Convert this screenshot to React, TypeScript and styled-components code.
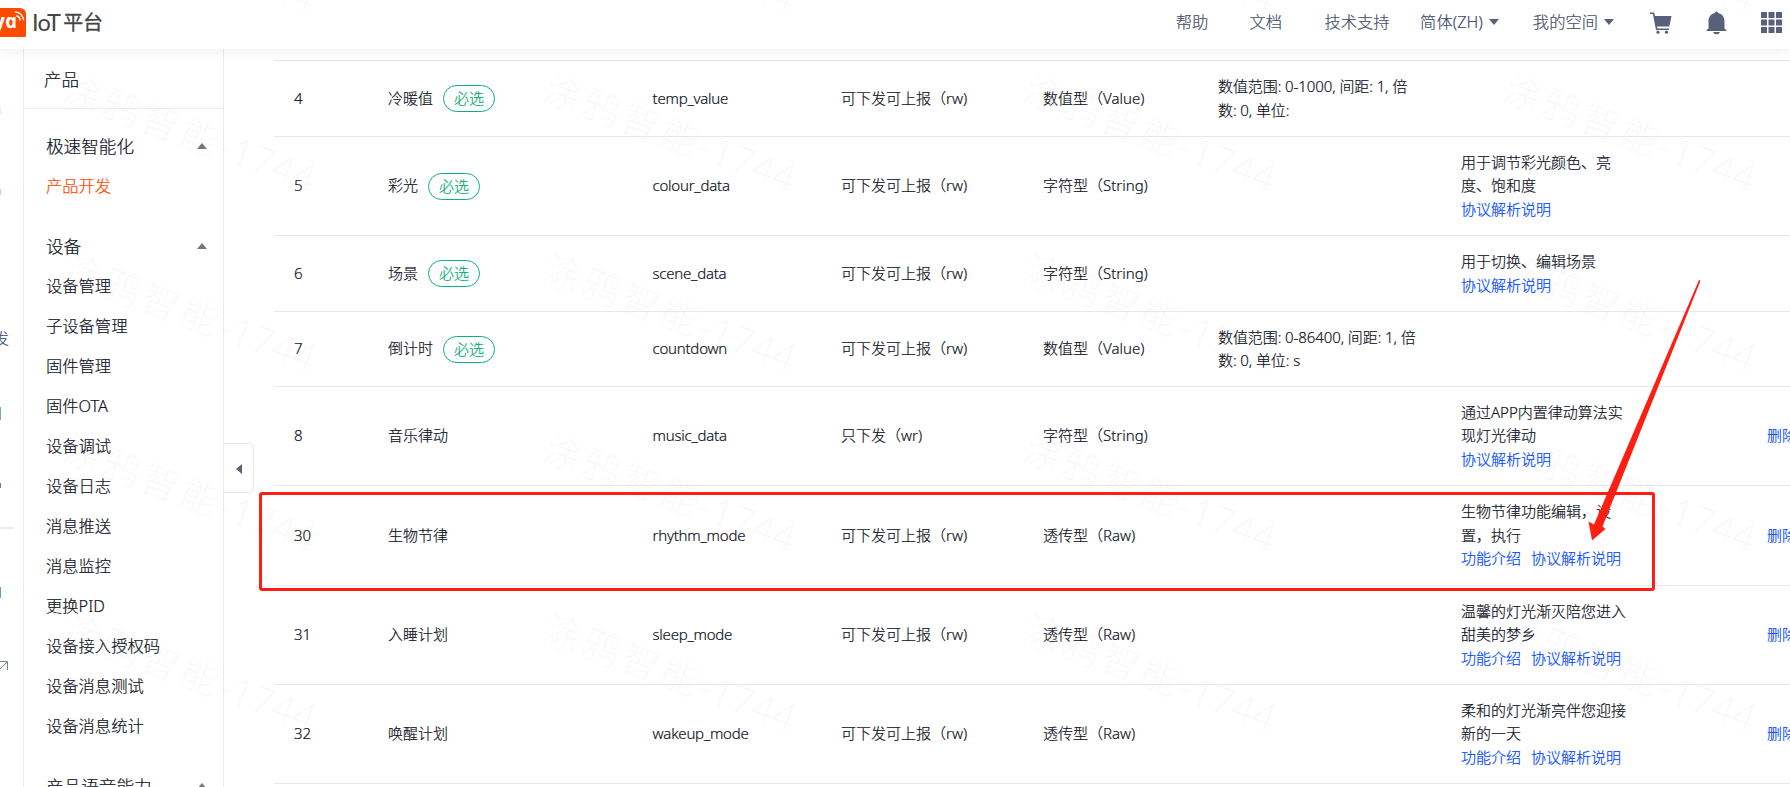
import React from "react";
import styled, { createGlobalStyle } from "styled-components";

interface MenuGroup {
	title: string;
	items: string[];
}

interface DataPoint {
	id: number;
	name: string;
	required?: boolean;
	code: string;
	transfer: string;
	type: string;
	range?: string;
	description?: string;
	links?: string[];
	removable?: boolean;
	height: number;
}

const menu: MenuGroup[] = [
	{ title: "极速智能化", items: ["产品开发"] },
	{
		title: "设备",
		items: [
			"设备管理",
			"子设备管理",
			"固件管理",
			"固件OTA",
			"设备调试",
			"设备日志",
			"消息推送",
			"消息监控",
			"更换PID",
			"设备接入授权码",
			"设备消息测试",
			"设备消息统计",
		],
	},
	{ title: "产品语音能力", items: [] },
];

const READ_WRITE = "可下发可上报（rw)";

const dataPoints: DataPoint[] = [
	{
		id: 4,
		name: "冷暖值",
		required: true,
		code: "temp_value",
		transfer: READ_WRITE,
		type: "数值型（Value)",
		range: "数值范围: 0-1000, 间距: 1, 倍数: 0, 单位:",
		height: 76,
	},
	{
		id: 5,
		name: "彩光",
		required: true,
		code: "colour_data",
		transfer: READ_WRITE,
		type: "字符型（String)",
		description: "用于调节彩光颜色、亮度、饱和度",
		links: ["协议解析说明"],
		height: 99,
	},
	{
		id: 6,
		name: "场景",
		required: true,
		code: "scene_data",
		transfer: READ_WRITE,
		type: "字符型（String)",
		description: "用于切换、编辑场景",
		links: ["协议解析说明"],
		height: 76,
	},
	{
		id: 7,
		name: "倒计时",
		required: true,
		code: "countdown",
		transfer: READ_WRITE,
		type: "数值型（Value)",
		range: "数值范围: 0-86400, 间距: 1, 倍数: 0, 单位: s",
		height: 75,
	},
	{
		id: 8,
		name: "音乐律动",
		code: "music_data",
		transfer: "只下发（wr)",
		type: "字符型（String)",
		description: "通过APP内置律动算法实现灯光律动",
		links: ["协议解析说明"],
		removable: true,
		height: 99,
	},
	{
		id: 30,
		name: "生物节律",
		code: "rhythm_mode",
		transfer: READ_WRITE,
		type: "透传型（Raw)",
		description: "生物节律功能编辑，设置，执行",
		links: ["功能介绍", "协议解析说明"],
		removable: true,
		height: 100,
	},
	{
		id: 31,
		name: "入睡计划",
		code: "sleep_mode",
		transfer: READ_WRITE,
		type: "透传型（Raw)",
		description: "温馨的灯光渐灭陪您进入甜美的梦乡",
		links: ["功能介绍", "协议解析说明"],
		removable: true,
		height: 99,
	},
	{
		id: 32,
		name: "唤醒计划",
		code: "wakeup_mode",
		transfer: READ_WRITE,
		type: "透传型（Raw)",
		description: "柔和的灯光渐亮伴您迎接新的一天",
		links: ["功能介绍", "协议解析说明"],
		removable: true,
		height: 99,
	},
];

const GlobalStyle = createGlobalStyle`
	* {
		box-sizing: border-box;
	}
	body {
		margin: 0;
		background: #fff;
		color: #10141f;
		font: 300 15px "Noto Sans", "Noto Sans CJK SC", sans-serif;
		-webkit-text-stroke: 0.2px;
	}
`;

const Page = styled.div`
	position: relative;
	display: flex;
	flex-direction: column;
	width: 1790px;
	height: 787px;
	overflow: hidden;
`;

const Header = styled.header`
	position: relative;
	z-index: 1;
	display: flex;
	flex: none;
	align-items: center;
	height: 49px;
	background: #fff;
	box-shadow: 0 2px 12px rgba(0, 0, 0, 0.07);
`;

const Brand = styled.div`
	display: flex;
	align-items: center;
	margin: -5px auto 0 0;
	color: #454545;
	-webkit-text-stroke: 0;
`;

const BrandLatin = styled.span`
	margin-left: 5px;
	font: 400 23.5px/30px Lato, sans-serif;
	letter-spacing: -0.8px;
`;

const BrandName = styled.span`
	margin-left: 3px;
	font: 400 20px/30px "Noto Sans CJK SC", sans-serif;
	-webkit-text-stroke: 0.3px;
`;

const NavItem = styled.div<{ $gap: number }>`
	display: flex;
	align-items: center;
	margin-right: ${({ $gap }) => $gap}px;
	padding-bottom: 6px;
	color: #454f69;
	font-size: 16.3px;
	line-height: 24px;
	white-space: nowrap;
`;

const CaretDown = styled.span`
	margin: 1px 0 0 6px;
	border: 5px solid transparent;
	border-top: 6px solid #57617a;
	border-bottom: 0;
`;

const HeaderIcon = styled.svg<{ $gap: number }>`
	flex: none;
	margin: -4px ${({ $gap }) => $gap}px 0 0;
	fill: #57617a;
`;

const Body = styled.div`
	display: flex;
	flex: 1;
	min-height: 0;
`;

const Rail = styled.aside`
	flex: none;
	width: 24px;
	padding-top: 58px;
	border-right: 1px solid #e9ebf6;
	overflow: hidden;
`;

const RailItem = styled.div<{ $height: number }>`
	display: flex;
	height: ${({ $height }) => $height}px;
	color: #454f69;
	font-size: 15px;
	line-height: 22px;
`;

const RailLabel = styled.span`
	margin-left: -6px;
`;

const RailMark = styled.span<{ $color: string; $height: number }>`
	width: 1px;
	height: ${({ $height }) => $height}px;
	background: ${({ $color }) => $color};
`;

const RailDivider = styled.div`
	width: 14px;
	height: 2px;
	margin-bottom: 58px;
	background: #e9ebf6;
`;

const Sidebar = styled.nav`
	flex: none;
	width: 200px;
	border-right: 1px solid #e9ebf6;
`;

const SidebarTitle = styled.div`
	height: 60px;
	padding-left: 20px;
	border-bottom: 1px solid #e9ebf6;
	font-size: 17.5px;
	line-height: 61px;
`;

const Group = styled.section`
	padding: 0 16px 0 22px;
	margin-bottom: 20px;

	&:first-of-type {
		margin-top: 17px;
	}
`;

const GroupTitle = styled.div`
	display: flex;
	align-items: center;
	justify-content: space-between;
	height: 40px;
	padding-bottom: 2px;
	font-size: 17.6px;
	white-space: nowrap;
`;

const CaretUp = styled.span`
	margin-top: 2px;
	border: 5px solid transparent;
	border-top: 0;
	border-bottom: 6px solid #777;
`;

const MenuItem = styled.div<{ $active: boolean }>`
	height: 40px;
	color: ${({ $active }) => ($active ? "#ff4a00" : "inherit")};
	font-size: 16.3px;
	line-height: 40px;
`;

const Handle = styled.div`
	display: flex;
	flex: none;
	align-items: center;
	justify-content: center;
	width: 30px;
	height: 50px;
	padding: 1px 0 0 1px;
	margin-top: 394px;
	border: 1px solid #e6e7ec;
	border-left: 0;
	border-radius: 0 5px 5px 0;
`;

const CaretLeft = styled.span`
	border: 5px solid transparent;
	border-right: 6px solid #57617a;
	border-left: 0;
`;

const Table = styled.main`
	flex: 1;
	min-width: 0;
	margin: 11px 0 0 20px;
	border-top: 1px solid #e8e9ed;
	overflow: hidden;
`;

const Row = styled.div<{ $height: number }>`
	display: grid;
	grid-template-columns: 94px 264.5px 188.5px 202px 175px 243px 306px 60px;
	align-items: center;
	height: ${({ $height }) => $height}px;
	padding-left: 20px;
	border-bottom: 1px solid #e8e9ed;
	line-height: 23.5px;
`;

const Cell = styled.div<{ $inset?: number; $spacing?: number }>`
	padding-right: ${({ $inset = 0 }) => $inset}px;
	letter-spacing: ${({ $spacing = 0 }) => $spacing}px;
`;

const NameCell = styled(Cell)`
	display: flex;
	align-items: center;
	gap: 10px;
`;

const RequiredTag = styled.span`
	width: 52px;
	height: 27px;
	border: 1px solid #0db07e;
	border-radius: 14px;
	color: #00a870;
	line-height: 24px;
	text-align: center;
`;

const Link = styled.a`
	margin-right: 10px;
	color: #0047ff;
	white-space: nowrap;
`;

const Watermark = styled.svg`
	position: absolute;
	inset: 0;
	z-index: 2;
	pointer-events: none;
`;

const Highlight = styled.div`
	position: absolute;
	top: 492px;
	left: 259px;
	z-index: 3;
	width: 1396px;
	height: 99px;
	border: 3px solid #ff1f12;
	border-radius: 3px;
`;

const Pointer = styled.svg`
	position: absolute;
	top: 278px;
	left: 1586px;
	z-index: 3;
`;

const Logo = () => (
	<svg width="27" height="29" viewBox="0 0 27 29">
		<path d="M0 0h20a6 6 0 0 1 6 6v22a1 1 0 0 1-1 1H0z" fill="#ff4a00" />
		<text
			x="0"
			y="20"
			transform="skewX(12) translate(-8.500 0)"
			fill="#fff"
			fontFamily="Open Sans"
			fontStyle="italic"
			fontWeight="700"
			fontSize="20"
		>
			ya
		</text>
		<g fill="none" stroke="#fff" strokeWidth="1.5" strokeLinecap="round">
			<path d="M16.500 8a4 4 0 0 1 3.500 4" />
			<path d="M15.500 4a9 9 0 0 1 8 7.500" />
		</g>
	</svg>
);

const DataRow = ({ point }: { point: DataPoint }) => (
	<Row $height={point.height}>
		<Cell>{point.id}</Cell>
		<NameCell>
			{point.name}
			{point.required && <RequiredTag>必选</RequiredTag>}
		</NameCell>
		<Cell $spacing={-0.22}>{point.code}</Cell>
		<Cell>{point.transfer}</Cell>
		<Cell>{point.type}</Cell>
		<Cell $inset={38} $spacing={-0.08}>
			{point.range}
		</Cell>
		<Cell $inset={134}>
			{point.description}
			{point.links && (
				<div>
					{point.links.map((link) => (
						<Link key={link}>{link}</Link>
					))}
				</div>
			)}
		</Cell>
		<Cell>{point.removable && <Link>删除</Link>}</Cell>
	</Row>
);

export default function App() {
	return (
		<Page>
			<GlobalStyle />
			<Header>
				<Brand>
					<Logo />
					<BrandLatin>IoT</BrandLatin>
					<BrandName>平台</BrandName>
				</Brand>
				<NavItem $gap={41}>帮助</NavItem>
				<NavItem $gap={42.5}>文档</NavItem>
				<NavItem $gap={30.5}>技术支持</NavItem>
				<NavItem $gap={34}>
					简体(ZH)
					<CaretDown />
				</NavItem>
				<NavItem $gap={36}>
					我的空间
					<CaretDown />
				</NavItem>
				<HeaderIcon $gap={34} width="22" height="22" viewBox="0 0 22 22">
					<path d="M0 .5h4.200L5 4h16.500l-2.200 10.500H7l.4 2H19V18H6L2.900 2H0z" />
					<circle cx="8" cy="20.200" r="1.600" />
					<circle cx="16.500" cy="20.200" r="1.600" />
				</HeaderIcon>
				<HeaderIcon $gap={34} width="21" height="24" viewBox="0 0 21 24">
					<path d="M9 2a1.500 1.500 0 0 1 3 0c4 .7 6.500 4 6.500 8v7.500l2 1.800V20H.5v-.7l2-1.800V10c0-4 2.500-7.300 6.500-8zM7 21h7c-.6 1.500-2 2.300-3.500 2.300S7.600 22.500 7 21z" />
				</HeaderIcon>
				<HeaderIcon $gap={8} width="21" height="21" viewBox="0 0 21 21">
					{[0, 7.5, 15].map((y) =>
						[0, 7.5, 15].map((x) => (
							<rect key={`${x}-${y}`} x={x} y={y} width="6" height="6" rx="0.5" />
						))
					)}
				</HeaderIcon>
			</Header>
			<Body>
				<Rail>
					<RailItem $height={82}>
						<RailMark $color="#c9f6ff" $height={8} />
					</RailItem>
					<RailItem $height={138}>
						<RailMark $color="#ffb0de" $height={6} />
					</RailItem>
					<RailItem $height={80}>
						<RailLabel>发</RailLabel>
					</RailItem>
					<RailItem $height={76}>
						<RailMark $color="#6fa5e0" $height={13} />
					</RailItem>
					<RailItem $height={44}>
						<RailMark $color="#5b76b5" $height={5} />
					</RailItem>
					<RailDivider />
					<RailItem $height={67}>
						<RailMark $color="#5f9ddb" $height={11} />
					</RailItem>
					<svg width="9" height="9" viewBox="0 0 9 9">
						<path d="M0 .5h7.500V9M7.500.5L0 8" fill="none" stroke="#7b8397" />
					</svg>
				</Rail>
				<Sidebar>
					<SidebarTitle>产品</SidebarTitle>
					{menu.map(({ title, items }) => (
						<Group key={title}>
							<GroupTitle>
								{title}
								<CaretUp />
							</GroupTitle>
							{items.map((item) => (
								<MenuItem key={item} $active={item === "产品开发"}>
									{item}
								</MenuItem>
							))}
						</Group>
					))}
				</Sidebar>
				<Handle>
					<CaretLeft />
				</Handle>
				<Table>
					{dataPoints.map((point) => (
						<DataRow key={point.id} point={point} />
					))}
				</Table>
			</Body>
			<Watermark width="1790" height="787">
				<pattern id="mark" y="60" width="480" height="180" patternUnits="userSpaceOnUse">
					<text
						x="-19"
						y="14"
						transform="translate(83 33) rotate(20.500)"
						fontSize="38"
						letterSpacing="3.500"
						fillOpacity="0.02"
						strokeWidth="0"
					>
						涂鸦智能<tspan letterSpacing="0.200">-1744</tspan>
					</text>
				</pattern>
				<rect width="1790" height="787" fill="url(#mark)" />
			</Watermark>
			<Highlight />
			<Pointer width="116" height="266" viewBox="0 0 116 266">
				<path
					d="M113 2l1.500.8L16.500 248.500l3 2.500L6 262.500 2.500 243.500l5.500 3z"
					fill="#ff1f12"
				/>
			</Pointer>
		</Page>
	);
}
